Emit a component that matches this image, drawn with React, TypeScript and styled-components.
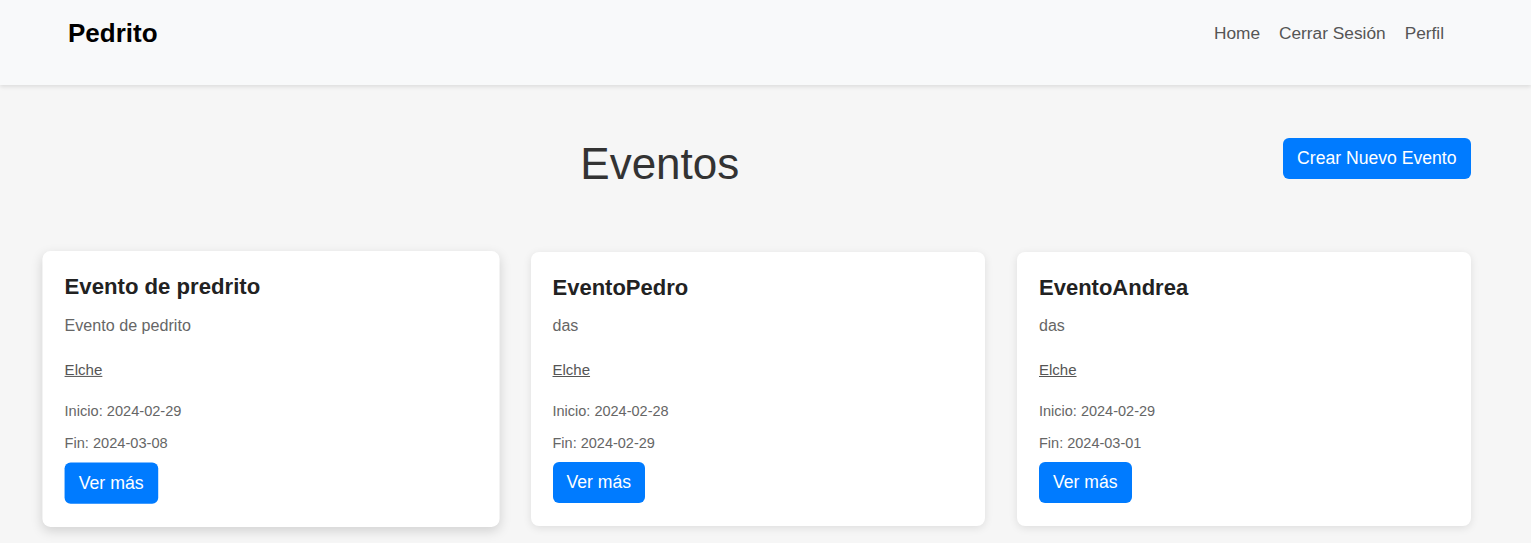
import React from "react";
import styled, { createGlobalStyle } from "styled-components";

interface IEvento {
    id: number;
    titulo: string;
    descripcion: string;
    lugar: string;
    inicio: string;
    fin: string;
}

const eventos: IEvento[] = [
    { id: 1, titulo: "Evento de predrito", descripcion: "Evento de pedrito", lugar: "Elche", inicio: "2024-02-29", fin: "2024-03-08" },
    { id: 2, titulo: "EventoPedro", descripcion: "das", lugar: "Elche", inicio: "2024-02-28", fin: "2024-02-29" },
    { id: 3, titulo: "EventoAndrea", descripcion: "das", lugar: "Elche", inicio: "2024-02-29", fin: "2024-03-01" },
];

const GlobalStyle = createGlobalStyle`
    body {
        margin: 0;
        background-color: #f6f6f6;
        font-family: "Liberation Sans", Arial, sans-serif;
        min-height: 100vh;
    }
    * {
        box-sizing: border-box;
    }
`;

export default function App() {
    return (
        <>
            <GlobalStyle />
            <Navbar>
                <Brand>Pedrito</Brand>
                <NavLinks>
                    <NavLink href="#">Home</NavLink>
                    <NavLink href="#">Cerrar Sesión</NavLink>
                    <NavLink href="#">Perfil</NavLink>
                </NavLinks>
            </Navbar>
            <Main>
                <Header>
                    <Title>Eventos</Title>
                    <PrimaryButton $wide>Crear Nuevo Evento</PrimaryButton>
                </Header>
                <Grid>
                    {eventos.map((ev, i) => (
                        <Card key={ev.id} $hovered={i === 0}>
                            <CardTitle>{ev.titulo}</CardTitle>
                            <Description>{ev.descripcion}</Description>
                            <Location href="#">{ev.lugar}</Location>
                            <DateText>Inicio: {ev.inicio}</DateText>
                            <DateText $last>Fin: {ev.fin}</DateText>
                            <PrimaryButton>Ver más</PrimaryButton>
                        </Card>
                    ))}
                </Grid>
            </Main>
        </>
    );
}

const Navbar = styled.nav`
    display: flex;
    align-items: center;
    justify-content: space-between;
    height: 85px;
    padding: 0 87px 19px 68px;
    background-color: #f8f9fa;
    box-shadow: 0 2px 4px rgba(0, 0, 0, 0.1);
`;

const Brand = styled.div`
    font-size: 26px;
    font-weight: 700;
    color: #000;
`;

const NavLinks = styled.div`
    display: flex;
    gap: 19px;
`;

const NavLink = styled.a`
    font-size: 17.3px;
    color: #555;
    text-decoration: none;
`;

const Main = styled.main`
    padding: 53px 60px 16px 44px;
`;

const Header = styled.div`
    display: flex;
    align-items: flex-start;
`;

const Title = styled.h1`
    flex: 1;
    margin: 1px 7px 0 0;
    text-align: center;
    font-size: 44px;
    font-weight: 400;
    color: #333;
`;

const PrimaryButton = styled.button<{ $wide?: boolean }>`
    align-self: flex-start;
    border: none;
    border-radius: 6px;
    background-color: #007bff;
    color: #fff;
    font-family: inherit;
    font-size: 17.6px;
    line-height: 21px;
    padding: 10px ${(p) => (p.$wide ? "14.5px" : "14px")};
    cursor: pointer;
`;

const Grid = styled.div`
    display: grid;
    grid-template-columns: repeat(3, 1fr);
    gap: 32.5px;
    margin-top: 63px;
`;

const Card = styled.div<{ $hovered?: boolean }>`
    display: flex;
    flex-direction: column;
    align-items: flex-start;
    background-color: #fff;
    border-radius: 8px;
    padding: 23px 22px 22.7px;
    box-shadow: ${(p) => (p.$hovered ? "0 4px 12px rgba(0, 0, 0, 0.15)" : "0 2px 8px rgba(0, 0, 0, 0.1)")};
    transform: ${(p) => (p.$hovered ? "scale(1.007)" : "none")};
`;

const CardTitle = styled.h3`
    margin: 0 0 16px;
    font-size: 22px;
    font-weight: 700;
    color: #222;
`;

const Description = styled.p`
    margin: 0 0 26px;
    font-size: 16px;
    color: #666;
`;

const Location = styled.a`
    font-size: 15px;
    color: #555;
    text-decoration: underline;
    margin-bottom: 25.3px;
`;

const DateText = styled.p<{ $last?: boolean }>`
    margin: 0 0 ${(p) => (p.$last ? "11px" : "16px")};
    font-size: 14.5px;
    color: #666;
`;
